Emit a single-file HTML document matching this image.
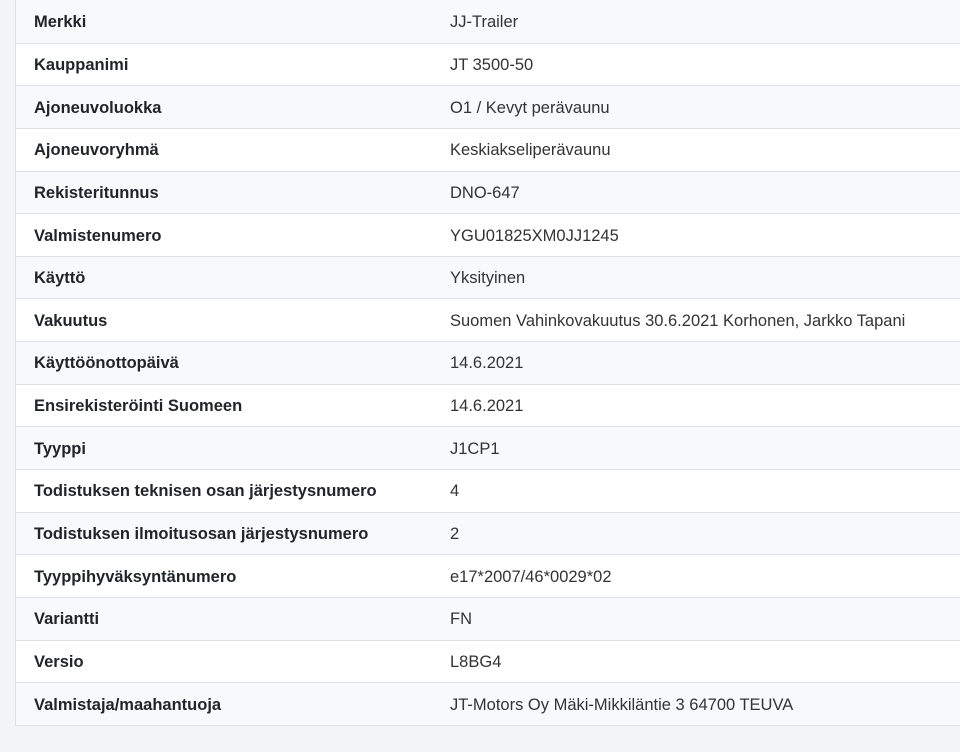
<!DOCTYPE html>
<html><head><meta charset="utf-8"><style>
body{margin:0;background:#f3f4f6;width:960px;height:752px;overflow:hidden;font-family:"Liberation Sans",sans-serif;color:#212529;}
.t{position:absolute;left:15px;top:0;width:960px;border-left:1px solid #dee2e6;border-bottom:1px solid #dee2e6;}
.r{height:41.65px;border-top:1px solid #dee2e6;display:flex;align-items:center;font-size:16.5px;background:#fff;box-sizing:content-box;}
.r>div{padding-top:2px}
.r:first-child{border-top:none;height:42.65px}
.r:nth-child(odd){background:#f8f9fa;}
.l{width:416px;padding-left:18px;font-weight:bold;color:#212529;flex:none}
.v{color:#333}
</style></head><body>
<div class="t">
<div class="r"><div class="l">Merkki</div><div class="v">JJ-Trailer</div></div>
<div class="r"><div class="l">Kauppanimi</div><div class="v">JT 3500-50</div></div>
<div class="r"><div class="l">Ajoneuvoluokka</div><div class="v">O1 / Kevyt perävaunu</div></div>
<div class="r"><div class="l">Ajoneuvoryhmä</div><div class="v">Keskiakseliperävaunu</div></div>
<div class="r"><div class="l">Rekisteritunnus</div><div class="v">DNO-647</div></div>
<div class="r"><div class="l">Valmistenumero</div><div class="v">YGU01825XM0JJ1245</div></div>
<div class="r"><div class="l">Käyttö</div><div class="v">Yksityinen</div></div>
<div class="r"><div class="l">Vakuutus</div><div class="v">Suomen Vahinkovakuutus 30.6.2021 Korhonen, Jarkko Tapani</div></div>
<div class="r"><div class="l">Käyttöönottopäivä</div><div class="v">14.6.2021</div></div>
<div class="r"><div class="l">Ensirekisteröinti Suomeen</div><div class="v">14.6.2021</div></div>
<div class="r"><div class="l">Tyyppi</div><div class="v">J1CP1</div></div>
<div class="r"><div class="l">Todistuksen teknisen osan järjestysnumero</div><div class="v">4</div></div>
<div class="r"><div class="l">Todistuksen ilmoitusosan järjestysnumero</div><div class="v">2</div></div>
<div class="r"><div class="l">Tyyppihyväksyntänumero</div><div class="v">e17*2007/46*0029*02</div></div>
<div class="r"><div class="l">Variantti</div><div class="v">FN</div></div>
<div class="r"><div class="l">Versio</div><div class="v">L8BG4</div></div>
<div class="r"><div class="l">Valmistaja/maahantuoja</div><div class="v">JT-Motors Oy Mäki-Mikkiläntie 3 64700 TEUVA</div></div>
</div>
</body></html>
